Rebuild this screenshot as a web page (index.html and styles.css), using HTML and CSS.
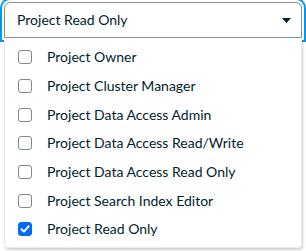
FILE: index.html
```html
<!DOCTYPE html>
<html>
<head>
<meta charset="utf-8">
<link rel="stylesheet" href="styles.css">
</head>
<body>
<div class="combo">
  <div class="select">
    <span class="value">Project Read Only</span>
    <svg class="caret" width="9" height="5" viewBox="0 0 9 5"><path d="M0 0 H9 L4.5 5 Z" fill="#001e2b"/></svg>
  </div>
  <ul class="menu">
    <li class="option"><span class="box"></span><span class="label">Project Owner</span></li>
    <li class="option"><span class="box"></span><span class="label">Project Cluster Manager</span></li>
    <li class="option"><span class="box"></span><span class="label">Project Data Access Admin</span></li>
    <li class="option"><span class="box"></span><span class="label">Project Data Access Read/Write</span></li>
    <li class="option"><span class="box"></span><span class="label">Project Data Access Read Only</span></li>
    <li class="option"><span class="box"></span><span class="label">Project Search Index Editor</span></li>
    <li class="option"><span class="box checked"><svg width="10" height="10" viewBox="0 0 10 10"><path d="M1.5 5.2 L4 7.6 L8.6 2.4" fill="none" stroke="#fff" stroke-width="2" stroke-linecap="round" stroke-linejoin="round"/></svg></span><span class="label">Project Read Only</span></li>
  </ul>
</div>
</body>
</html>
```
FILE: styles.css
```css
html, body {
  margin: 0;
  padding: 0;
  background: #fff;
  width: 306px;
  height: 251px;
  overflow: hidden;
}
body {
  font-family: Lato, "Liberation Sans", sans-serif;
  font-size: 14px;
  color: #001e2b;
}
.combo {
  margin: 2px 0 0 4px;
  width: 298px;
}
.select {
  height: 34px;
  border: 1px solid #889397;
  border-radius: 6px 6px 0 0;
  box-shadow: 0 0 0 2px #fff, 0 0 0 4px #0498ec;
  display: flex;
  align-items: center;
  justify-content: space-between;
  padding: 0 10px 0 12px;
  background: #fff;
}
.value {
  line-height: 20px;
}
.caret {
  display: block;
}
.menu {
  list-style: none;
  margin: 0;
  padding: 5px 0 3px 0;
  background: #fff;
  border: 1px solid #e8edeb;
  border-top: none;
  border-radius: 0 0 4px 4px;
  box-shadow: 1px 2px 3px rgba(0, 30, 43, 0.2);
}
.option {
  height: 28.67px;
  display: flex;
  align-items: center;
  padding-left: 13px;
  gap: 15px;
}
.box {
  width: 14px;
  height: 14px;
  box-sizing: border-box;
  border: 1.5px solid #7c8a91;
  border-radius: 3px;
  display: flex;
  align-items: center;
  justify-content: center;
  flex: none;
}
.box.checked {
  background: #016bf8;
  border-color: #016bf8;
}
.box svg {
  display: block;
}
.label {
  line-height: 20px;
}
```
